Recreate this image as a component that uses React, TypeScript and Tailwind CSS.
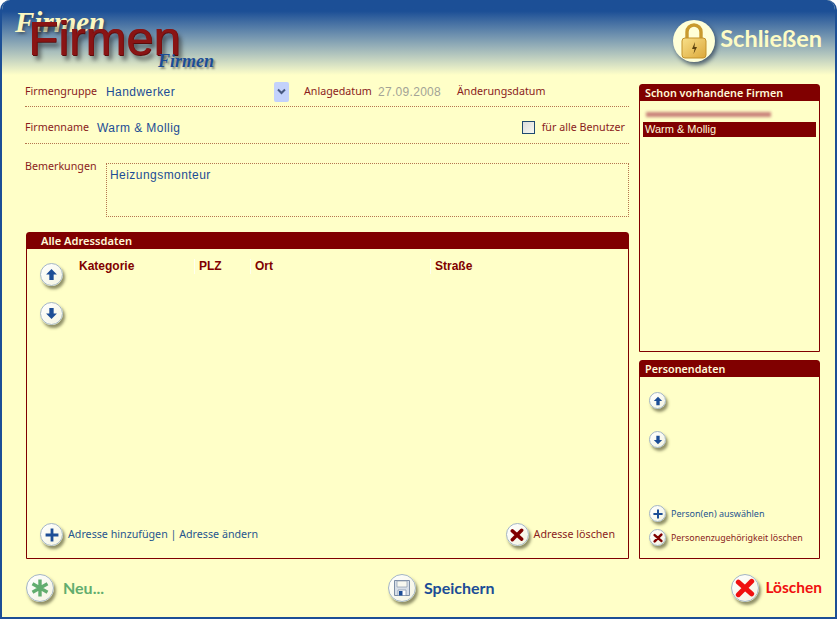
import type { ReactNode } from "react";

const label = "text-[10.7px] text-[#8a1c1c] font-['Noto_Sans',sans-serif]";
const value = "text-[12px] tracking-[0.45px] text-[#1c4d96] font-['Liberation_Sans',sans-serif]";

function Round({ size, children }: { size: number; children: ReactNode }) {
  const cls =
    size === 32
      ? "w-[28px] h-[28px]"
      : size === 24
        ? "w-[23px] h-[23px]"
        : "w-[17px] h-[17px]";
  return (
    <span
      className={`${cls} shrink-0 rounded-full border border-[#a3b5c6] bg-gradient-to-br from-white to-[#f4f4e2] shadow-[2px_3px_3px_rgba(70,70,40,0.6)] grid place-items-center`}
    >
      {children}
    </span>
  );
}

function Arrow({ up, size }: { up?: boolean; size: number }) {
  return (
    <svg width={size} height={size} viewBox="0 0 12 12">
      <path
        d={up ? "M6 1 11 6H8v5H4V6H1Z" : "M6 11 11 6H8V1H4v5H1Z"}
        fill="#1c4d96"
      />
    </svg>
  );
}

function Plus({ size }: { size: number }) {
  return (
    <svg width={size} height={size} viewBox="0 0 12 12">
      <path d="M6 0.5v11M0.5 6h11" stroke="#1c4d96" strokeWidth="2.4" />
    </svg>
  );
}

function Cross({ size, color }: { size: number; color: string }) {
  return (
    <svg width={size} height={size} viewBox="0 0 12 12">
      <path
        d="M2 2.5 10 9.5M10 2 2 10"
        stroke={color}
        strokeWidth="3"
        strokeLinecap="round"
      />
    </svg>
  );
}

function Panel({
  title,
  className,
  children,
}: {
  title: string;
  className: string;
  children: ReactNode;
}) {
  return (
    <section
      className={`${className} flex flex-col border border-[#800000] rounded-t-[3px]`}
    >
      <h2 className="h-[16px] shrink-0 bg-[#800000] px-[5px] text-[10.8px] leading-[15px] font-semibold text-[#fff8d8] font-['Noto_Sans',sans-serif]">
        {title}
      </h2>
      {children}
    </section>
  );
}

function Logo() {
  return (
    <div className="relative w-[260px] h-[75px] select-none">
      <span className="absolute left-[13px] top-[4px] text-[29px] leading-[36px] italic font-bold text-[#fbf7c0] font-['Liberation_Serif',serif] [text-shadow:2px_2px_3px_rgba(40,40,40,0.5)]">
        Firmen
      </span>
      <span className="absolute left-[26px] top-[10px] text-[49px] leading-[56px] text-[#8a1414] font-['Liberation_Sans',sans-serif] [text-shadow:1px_0_0_#7a1010,1px_1px_0_#5a0a0a,4px_5px_4px_rgba(30,30,30,0.6)]">
        Firmen
      </span>
      <span className="absolute left-[156px] top-[50px] text-[18px] leading-[22px] italic font-bold text-[#1c4d96] font-['Liberation_Serif',serif] [text-shadow:2px_2px_2px_rgba(40,40,40,0.45)]">
        Firmen
      </span>
    </div>
  );
}

function Lock() {
  return (
    <svg width="26" height="36" viewBox="0 0 26 36">
      <defs>
        <linearGradient id="lockBody" x1="0" y1="0" x2="1" y2="1">
          <stop offset="0" stopColor="#f8e08a" />
          <stop offset="1" stopColor="#dca83a" />
        </linearGradient>
      </defs>
      <path
        d="M6 16V9a7 7 0 0 1 14 0v7"
        fill="none"
        stroke="#c99a2e"
        strokeWidth="3.4"
      />
      <rect x="1" y="15" width="24" height="20" rx="3" fill="url(#lockBody)" stroke="#c3922a" />
      <path d="M14 19 11 26h2.500l-1 5 3.500-7h-2.500Z" fill="#5b4210" />
    </svg>
  );
}

export default function App() {
  return (
    <div className="w-[837px] h-[619px] bg-white overflow-hidden">
      <div className="w-full h-full rounded-t-[10px] border-x-2 border-b-[2px] border-[#1c4f96] bg-[#ffffc8] flex flex-col overflow-hidden">
        {/* header */}
        <header className="h-[75px] shrink-0 bg-gradient-to-b from-[#1c4f96] from-[15%] to-[#ffffc8] flex justify-between">
          <Logo />
          <button className="flex items-center gap-[5px] pr-[13px] pt-[7px] h-[75px]">
            <span className="w-[42px] h-[42px] rounded-full bg-[#ffffd8] shadow-[2px_3px_4px_rgba(30,50,80,0.7)] grid place-items-center">
              <Lock />
            </span>
            <span className="text-[23.500px] font-bold text-[#fdfbc4] font-['Lato',sans-serif] -mt-[4px]">
              Schließen
            </span>
          </button>
        </header>

        <div className="flex-1 flex pl-[23px] pr-[15px] gap-[10px]">
          {/* left column */}
          <main className="w-[604px] flex flex-col">
            <div className="h-[32px] flex items-center border-b border-dotted border-[#b5764f] pt-[2px]">
              <span className={`${label} w-[81px]`}>Firmengruppe</span>
              <span className={`${value} w-[168px]`}>Handwerker</span>
              <span className="w-[15px] h-[20px] rounded-[2px] bg-[#c3d2fb] grid place-items-center mr-[15px]">
                <svg width="9" height="7" viewBox="0 0 9 7">
                  <path d="M1 1.500 4.500 5 8 1.500" fill="none" stroke="#47597f" strokeWidth="2" />
                </svg>
              </span>
              <span className={`${label} w-[74px]`}>Anlagedatum</span>
              <span className="text-[12px] tracking-[0.3px] text-[#a3a396] font-['Liberation_Sans',sans-serif] w-[79px]">
                27.09.2008
              </span>
              <span className={label}>Änderungsdatum</span>
            </div>

            <div className="h-[37px] flex items-center border-b border-dotted border-[#b5764f] pt-[5px]">
              <span className={`${label} w-[72px]`}>Firmenname</span>
              <span className={`${value} flex-1`}>Warm &amp; Mollig</span>
              <span className="w-[13px] h-[13px] border border-[#1f4a70] bg-gradient-to-br from-[#dcdcdc] to-[#f8f8f0] mr-[7px]" />
              <span className={`${label} pr-[4px]`}>für alle Benutzer</span>
            </div>

            <div className="flex pt-[14px] h-[88px]">
              <span className={`${label} w-[81px]`}>Bemerkungen</span>
              <div className="mt-[5px] w-[523px] h-[54px] border border-dotted border-[#b5764f] px-[3px] leading-[19px]">
                <span className={value}>Heizungsmonteur</span>
              </div>
            </div>

            <Panel title="Alle Adressdaten" className="ml-[1px] w-[603px] h-[327px] [&>h2]:pl-[14px] [&>h2]:text-[11.100px]">
              <div className="flex-1 flex flex-col pl-[13px] pr-[13px]">
                <div className="flex h-[246px]">
                  <div className="w-[39px] pt-[14px] flex flex-col gap-[16px]">
                    <Round size={24}>
                      <Arrow up size={13} />
                    </Round>
                    <Round size={24}>
                      <Arrow size={13} />
                    </Round>
                  </div>
                  <div className="flex-1 pt-[10px]">
                    <div className="flex text-[12px] leading-[15px] font-bold text-[#800000] font-['Liberation_Sans',sans-serif]">
                      <span className="w-[115px]">Kategorie</span>
                      <span className="w-[56px] pl-[4px] border-l border-[#fffff0]">PLZ</span>
                      <span className="w-[180px] pl-[4px] border-l border-[#fffff0]">Ort</span>
                      <span className="pl-[4px] border-l border-[#fffff0]">Straße</span>
                    </div>
                  </div>
                </div>
                <div className="flex items-center justify-between pt-[28px]">
                  <div className="flex items-center gap-[5px]">
                    <Round size={24}>
                      <Plus size={14} />
                    </Round>
                    <span className="text-[10.700px] text-[#27568f] font-['Noto_Sans',sans-serif]">
                      Adresse hinzufügen | Adresse ändern
                    </span>
                  </div>
                  <div className="flex items-center gap-[5px]">
                    <Round size={24}>
                      <Cross size={14} color="#800000" />
                    </Round>
                    <span className="text-[10.700px] text-[#8a1c1c] font-['Noto_Sans',sans-serif]">
                      Adresse löschen
                    </span>
                  </div>
                </div>
              </div>
            </Panel>
          </main>

          {/* right column */}
          <aside className="w-[181px] pt-[9px] flex flex-col gap-[8px]">
            <Panel title="Schon vorhandene Firmen" className="h-[268px]">
              <div className="px-[3px] pt-[5px]">
                <div className="h-[16px] flex items-center pl-[3px]">
                  <div className="w-[125px] h-[5px] bg-[#c9827a] blur-[1.500px]" />
                </div>
                <div className="h-[15px] bg-[#800000] pl-[2px] text-[11px] leading-[14px] text-[#fff8d8] font-['Liberation_Sans',sans-serif]">
                  Warm &amp; Mollig
                </div>
              </div>
            </Panel>
            <Panel title="Personendaten" className="h-[199px]">
              <div className="flex-1 flex flex-col pl-[9px] pt-[15px]">
                <div className="flex flex-col gap-[22px]">
                  <Round size={16}>
                    <Arrow up size={10} />
                  </Round>
                  <Round size={16}>
                    <Arrow size={10} />
                  </Round>
                </div>
                <div className="mt-auto pb-[12px] flex flex-col gap-[7px]">
                  <div className="flex items-center gap-[5px]">
                    <Round size={16}>
                      <Plus size={10} />
                    </Round>
                    <span className="text-[9px] leading-[17px] text-[#27568f] font-['Noto_Sans',sans-serif]">
                      Person(en) auswählen
                    </span>
                  </div>
                  <div className="flex items-center gap-[5px]">
                    <Round size={16}>
                      <Cross size={10} color="#800000" />
                    </Round>
                    <span className="text-[8.900px] leading-[17px] text-[#8a1c1c] font-['Noto_Sans',sans-serif]">
                      Personenzugehörigkeit löschen
                    </span>
                  </div>
                </div>
              </div>
            </Panel>
          </aside>
        </div>

        {/* footer */}
        <footer className="h-[57px] shrink-0 flex items-start pt-[14px] pl-[24px] pr-[13px] font-['Lato',sans-serif] text-[16px] font-bold">
          <div className="flex items-center gap-[9px] w-[362px]">
            <Round size={32}>
              <svg width="20" height="20" viewBox="0 0 20 20">
                <path
                  d="M10 1.500V18.500M2.500 5.800 17.500 14.200M17.500 5.800 2.500 14.200"
                  stroke="#62ad6e"
                  strokeWidth="3.400"
                />
              </svg>
            </Round>
            <span className="text-[#62ad6e]">Neu...</span>
          </div>
          <div className="flex items-center gap-[8px]">
            <Round size={32}>
              <svg width="18" height="18" viewBox="0 0 18 18">
                <path d="M1.500 1.500h15v15h-15Z" fill="#d8dfe8" stroke="#7d8ea6" />
                <path d="M4 2h10v6H4Z" fill="#f8f8f0" stroke="#8d9cb0" strokeWidth="0.700" />
                <path d="M5 11h8v5.500H5Z" fill="#fff" stroke="#7d8ea6" strokeWidth="0.700" />
                <path d="M6 12h3.500v4.500H6Z" fill="#1c4d96" />
              </svg>
            </Round>
            <span className="text-[#1c4d96]">Speichern</span>
          </div>
          <div className="ml-auto flex items-center gap-[6px]">
            <Round size={32}>
              <Cross size={20} color="#f01010" />
            </Round>
            <span className="text-[15.500px] text-[#f01010]">Löschen</span>
          </div>
        </footer>
      </div>
    </div>
  );
}
